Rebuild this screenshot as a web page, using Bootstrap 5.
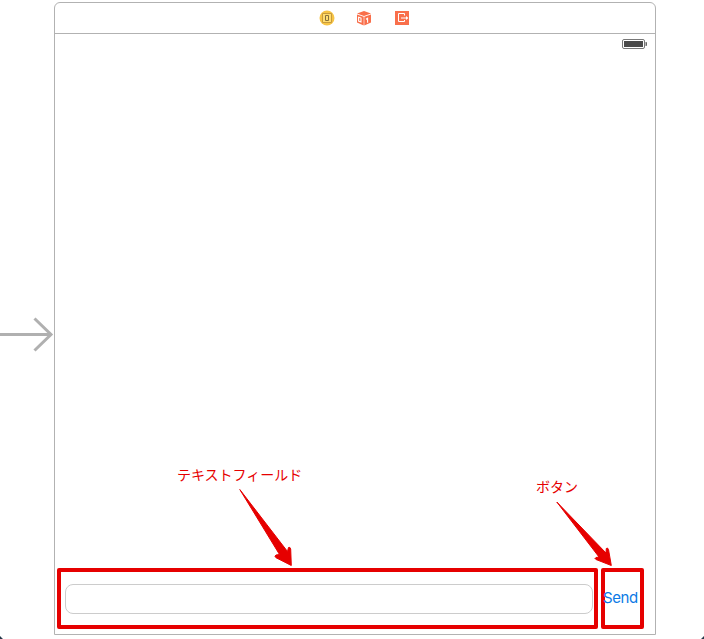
<!DOCTYPE html>
<html lang="ja">
<head>
<meta charset="utf-8">
<meta name="viewport" content="width=device-width, initial-scale=1">
<title>Storyboard</title>
<link href="https://cdn.jsdelivr.net/npm/bootstrap@5.3.0/dist/css/bootstrap.min.css" rel="stylesheet">
<style>
body{width:704px;height:639px;background:#fff;font-family:"Liberation Sans","Noto Sans CJK JP",sans-serif}
.entry-arrow{width:54px;padding-top:316px}
.scene{width:602px;height:633px;margin-top:2px;border:1px solid #b2b2b2;border-radius:6px 6px 0 0}
.dock{height:31px;border-bottom:1px solid #b2b2b2;padding:0 0 1px 264px;gap:22px}
.dock svg+svg{margin-left:-1px}
.dock svg:last-child{margin-left:0}
.status{height:20px;padding:5px 7px 0 0}
.input-row{padding:0 11px 5px 2px;gap:3px}
.marked{height:61px;border:4px solid #e60000;border-radius:2px}
.marked-field{width:541px;padding:0 1px 0 4px}
.marked-button{width:43px}
.message-field{height:30px;border:1px solid #ccc;border-radius:8px;box-shadow:none!important}
.send{font:15px/20px "Inter","Liberation Sans",sans-serif;letter-spacing:-.4px;color:#0b7ae5;margin:-1px 0 0 -2px}
.note{color:#e60000;font:14px/20px "Noto Sans CJK JP",sans-serif;white-space:nowrap}
.note-field{left:177px;top:464px}
.note-button{left:536px;top:476px}
.overlay{left:0;top:0;pointer-events:none}
</style>
<script src="https://cdn.jsdelivr.net/npm/bootstrap@5.3.0/dist/js/bootstrap.bundle.min.js"></script>
</head>
<body class="position-relative overflow-hidden">
<main class="d-flex align-items-start">
  <div class="entry-arrow flex-shrink-0">
    <svg class="d-block" width="54" height="37" fill="none" stroke="#b0b0b0" stroke-width="3"><path d="M0 18.5H51M34.5 2.5L51 18.5L34.5 34.5"/></svg>
  </div>
  <section class="scene d-flex flex-column flex-shrink-0">
    <header class="dock d-flex align-items-center flex-shrink-0">
      <svg width="16" height="16" viewBox="0 0 16 16"><circle cx="8" cy="8" r="7.5" fill="#f7c445"/><path d="M3.5 3.5h9v9h-9z" fill="#ffdc70" stroke="#c79a3c"/><path d="M6.500 5.500h3v5h-3z" fill="#ffdc70" stroke="#86713c"/></svg>
      <svg width="16" height="16" viewBox="0 0 16 16"><path d="M1 3.400L8 1l7 2.400-7 2.500zM1 4.500l6.700 2.300v8.600L1 12.400zM15 4.500L8.300 6.800v8.600l6.700-3z" fill="#f96f4b"/><path d="M2.600 7.300l2.400.8v3.800l-2.400-.9zM10 9.200l1.600-1v4.600" fill="none" stroke="#fff" stroke-width="1.100"/></svg>
      <svg width="16" height="16" viewBox="0 0 16 16"><path d="M1 1h14v14H1z" fill="#f96f4b"/><path d="M10.500 5.500v-2h-6v8h6v-1.500M7 8h6.500" fill="none" stroke="#fff" stroke-width="1"/><path d="M12 6l2.300 2L12 10z" fill="#fff"/></svg>
    </header>
    <div class="status d-flex justify-content-end">
      <svg width="26" height="10" viewBox="0 0 26 10"><rect x=".5" y=".5" width="22" height="9" rx="1.500" fill="#fff" stroke="#777"/><path d="M2 2h19v6H2z" fill="#4a4a4a"/><path d="M23.500 3h.7q.8 0 .8 1v2q0 1-.8 1h-.7z" fill="#666"/></svg>
    </div>
    <div class="input-row d-flex mt-auto">
      <div class="marked marked-field d-flex align-items-center"><input class="form-control message-field p-0" type="text" aria-label="テキストフィールド"></div>
      <div class="marked marked-button d-flex align-items-center"><button class="btn send border-0 p-0" type="button">Send</button></div>
    </div>
  </section>
</main>
<div class="note note-field position-absolute">テキストフィールド</div>
<div class="note note-button position-absolute">ボタン</div>
<svg class="overlay position-absolute" width="704" height="639">
  <g fill="#e60000" stroke="#e60000" stroke-width="1" stroke-linejoin="round">
    <path d="M239.800 489.500L279.500 554.500L276 555Q274 556.300 276 557.700L291.300 565.500L290.700 549Q290 546.500 288.500 547.500L287.500 551.500Z"/>
    <path d="M556.800 502L599 557L596 557.500Q594 558.500 596 559.500L611.300 565.500L608.500 549.500Q607.500 547 606.300 548.500L606 553Z"/>
  </g>
  <path d="M0 636l3 3H0zM704 636v3h-3z" fill="#24384a"/>
</svg>
</body>
</html>
